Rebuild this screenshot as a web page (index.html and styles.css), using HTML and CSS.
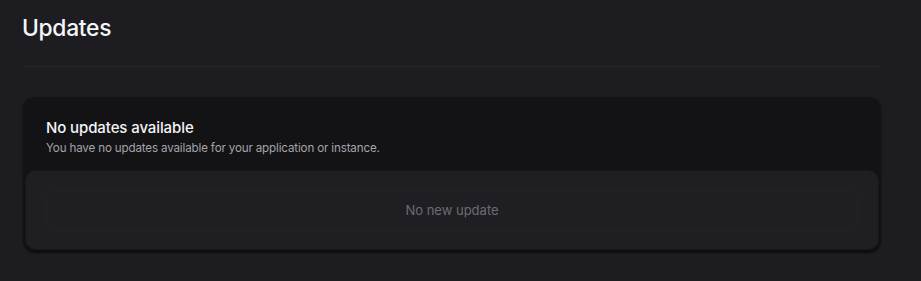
FILE: index.html
```html
<!DOCTYPE html>
<html>
<head>
<meta charset="utf-8">
<link rel="stylesheet" href="styles.css">
</head>
<body>
<main class="page">
  <h1 class="title">Updates</h1>
  <hr class="divider">
  <section class="card">
    <div class="card-head">
      <h2 class="card-title">No updates available</h2>
      <p class="card-sub">You have no updates available for your application or instance.</p>
    </div>
    <div class="card-body">
      <div class="empty">No new update</div>
    </div>
  </section>
</main>
</body>
</html>
```

FILE: styles.css
```css
html, body {
  margin: 0;
  padding: 0;
  background: #1d1d21;
  height: 100%;
}
body {
  font-family: Inter, "Noto Sans", sans-serif;
  color: #f4f4f6;
}
.page {
  padding: 13px 40px 0 23px;
}
.title {
  margin: 0 0 0 -1px;
  font-size: 22.8px;
  font-weight: 500;
  line-height: 30px;
  letter-spacing: -0.3px;
  color: #f6f6f8;
}
.divider {
  margin: 23px 0 0;
  border: 0;
  height: 1px;
  background: #25252a;
}
.card {
  margin-top: 30px;
  background: #131316;
  border-radius: 12px;
  padding: 0 3px 3px;
  box-shadow: 0 1px 2px rgba(0,0,0,0.5);
}
.card-head {
  padding: 21px 20px 15px;
}
.card-title {
  margin: 0;
  font-size: 15px;
  font-weight: 500;
  line-height: 19px;
  letter-spacing: -0.1px;
  color: #f4f4f6;
}
.card-sub {
  margin: 3px 0 0;
  font-size: 11.6px;
  line-height: 16px;
  letter-spacing: -0.15px;
  color: #a3a3ab;
}
.card-body {
  background: #1f1f23;
  border-radius: 10px;
  padding: 20px 20px 18px;
  box-shadow: 0 0 0 1px #19191c, 0 2px 3px rgba(0,0,0,0.5);
}
.empty {
  height: 36px;
  border-radius: 6px;
  border: 1px solid #222226;
  display: flex;
  align-items: center;
  justify-content: center;
  padding-bottom: 2px;
  box-sizing: content-box;
  font-size: 13px;
  color: #6c6c74;
}
```
